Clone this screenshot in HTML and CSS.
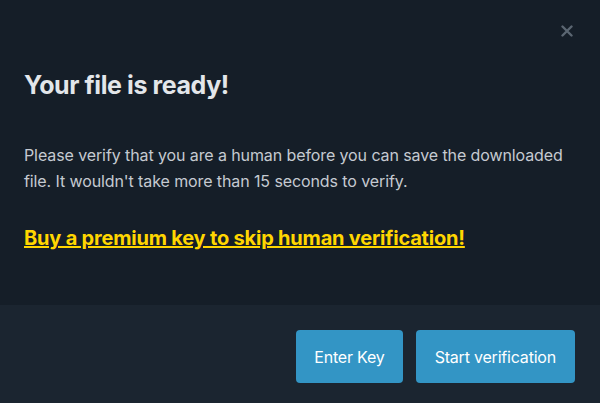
FILE: index.html
```html
<!DOCTYPE html>
<html>
<head>
<meta charset="utf-8">
<link rel="stylesheet" href="styles.css">
</head>
<body>
<div class="modal">
  <div class="body">
    <button class="close" aria-label="Close">
      <svg width="12" height="12" viewBox="0 0 12 12"><path d="M1.5 1.5L10.5 10.5M10.5 1.5L1.5 10.5" stroke="#5b6672" stroke-width="2.4" stroke-linecap="round"/></svg>
    </button>
    <h1 class="title">Your file is ready!</h1>
    <p class="text">Please verify that you are a human before you can save the downloaded file. It wouldn't take more than 15 seconds to verify.</p>
    <a class="premium" href="#">Buy a premium key to skip human verification!</a>
  </div>
  <div class="footer">
    <button class="btn">Enter Key</button>
    <button class="btn btn-wide">Start verification</button>
  </div>
</div>
</body>
</html>
```
FILE: styles.css
```css
html, body {
  margin: 0;
  padding: 0;
  background: #151e28;
  font-family: Inter, "Liberation Sans", Arial, sans-serif;
}
.modal {
  width: 600px;
  height: 403px;
  display: flex;
  flex-direction: column;
}
.body {
  position: relative;
  height: 305px;
  box-sizing: border-box;
  padding: 69px 24px 0 24px;
  background: #151e28;
}
.close {
  position: absolute;
  top: 25px;
  right: 27px;
  background: none;
  border: 0;
  padding: 0;
  width: 12px;
  height: 12px;
  display: flex;
}
.title {
  margin: 0;
  font-size: 25px;
  font-weight: 700;
  color: #e3e6ea;
  line-height: 32px;
  letter-spacing: -0.4px;
}
.text {
  margin: 41px 0 0 0;
  font-size: 16px;
  line-height: 26px;
  color: #c5cad1;
  letter-spacing: -0.1px;
}
.premium {
  display: inline-block;
  margin-top: 32px;
  font-size: 20px;
  font-weight: 700;
  color: #ffd600;
  text-decoration: underline;
  letter-spacing: -0.2px;
}
.footer {
  flex: 1;
  background: #1b2530;
  display: flex;
  justify-content: flex-end;
  align-items: flex-start;
  gap: 13px;
  padding: 25px 25px 0 0;
}
.btn {
  height: 53px;
  padding: 0 18px;
  background: #3395c5;
  color: #ffffff;
  border: 0;
  border-radius: 4px;
  font-family: Inter, "Liberation Sans", Arial, sans-serif;
  font-size: 16px;
  letter-spacing: -0.2px;
}
.btn-wide {
  padding: 0 19px;
}
```
